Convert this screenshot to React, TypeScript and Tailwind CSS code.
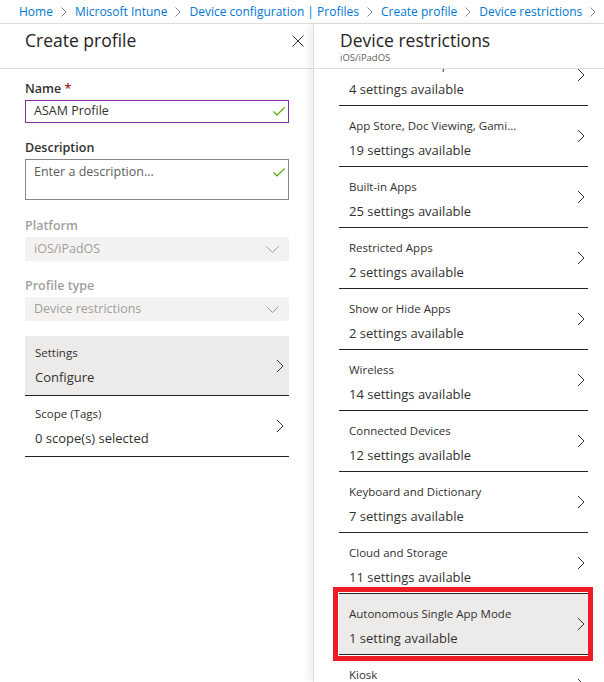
import React from "react";

const crumbs = [
  "Home",
  "Microsoft Intune",
  "Device configuration | Profiles",
  "Create profile",
  "Device restrictions",
];

interface SettingRow {
  title: string;
  detail: string;
  selected?: boolean;
}

const rows: SettingRow[] = [
  { title: "Locked Screen Experience", detail: "4 settings available" },
  { title: "App Store, Doc Viewing, Gami...", detail: "19 settings available" },
  { title: "Built-in Apps", detail: "25 settings available" },
  { title: "Restricted Apps", detail: "2 settings available" },
  { title: "Show or Hide Apps", detail: "2 settings available" },
  { title: "Wireless", detail: "14 settings available" },
  { title: "Connected Devices", detail: "12 settings available" },
  { title: "Keyboard and Dictionary", detail: "7 settings available" },
  { title: "Cloud and Storage", detail: "11 settings available" },
  { title: "Autonomous Single App Mode", detail: "1 setting available", selected: true },
  { title: "Kiosk", detail: "3 settings available" },
];

const ChevronRight = () => (
  <svg width="8" height="14" viewBox="0 0 8 14">
    <polyline points="1,1 7,7 1,13" fill="none" stroke="#323130" strokeWidth="1" />
  </svg>
);

const ChevronDown = () => (
  <svg width="13" height="7" viewBox="0 0 13 7">
    <polyline points="0.5,0.5 6.5,6.5 12.5,0.5" fill="none" stroke="#a19f9d" strokeWidth="1" />
  </svg>
);

const Check = () => (
  <svg width="12" height="9" viewBox="0 0 12 9">
    <polyline points="0.5,4.5 4,8 11.5,0.5" fill="none" stroke="#57a300" strokeWidth="1.2" />
  </svg>
);

const Crumb = ({ label }: { label: string }) => (
  <div className="flex items-center">
    <span className="whitespace-nowrap">{label}</span>
    <svg width="6" height="10" viewBox="0 0 6 10" className="mx-[8px]">
      <polyline points="0.5,0.5 5,5 0.5,9.5" fill="none" stroke="#8a8886" strokeWidth="1" />
    </svg>
  </div>
);

const Label = ({ children, disabled }: { children: React.ReactNode; disabled?: boolean }) => (
  <p
    className={`text-[12.5px] leading-[17px] font-semibold ${
      disabled ? "text-[#a19f9d]" : "text-[#323130]"
    }`}
  >
    {children}
  </p>
);

const Select = ({ value }: { value: string }) => (
  <div className="mt-[3px] h-[24px] bg-[#f3f2f1] rounded-[2px] flex items-center justify-between pl-[9px] pr-[10px]">
    <span className="text-[12.5px] text-[#a19f9d]">{value}</span>
    <ChevronDown />
  </div>
);

export default function App() {
  return (
    <div className="w-[604px] h-[682px] overflow-hidden bg-white text-[#323130] font-['Open_Sans',sans-serif]">
      <nav className="h-[24px] flex items-center pl-[19px] text-[12px] text-[#0078d4] border-b border-[#e1dfdd] overflow-hidden">
        {crumbs.map((c) => (
          <Crumb key={c} label={c} />
        ))}
      </nav>

      <div className="flex h-[658px]">
        {/* left blade */}
        <section className="w-[313px] shrink-0 flex flex-col">
          <header className="h-[45px] border-b border-[#e1dfdd] flex items-start justify-between pl-[25px] pr-[9px] pt-[3px]">
            <h1 className="text-[17.5px] leading-[26px] text-[#252423]">Create profile</h1>
            <svg width="12" height="12" viewBox="0 0 12 12" className="mt-[8px]">
              <path d="M0.5 0.5 L11.5 11.5 M11.5 0.5 L0.5 11.5" stroke="#323130" strokeWidth="1" />
            </svg>
          </header>

          <div className="pl-[25px] pr-[24px] pt-[11px] flex flex-col">
            <Label>
              Name <span className="text-[#a4262c]">*</span>
            </Label>
            <div className="mt-[3px] h-[23px] border border-[#8a2da5] flex items-center justify-between pl-[8px] pr-[3px]">
              <span className="text-[12.5px] text-[#323130]">ASAM Profile</span>
              <Check />
            </div>

            <div className="mt-[16px]">
              <Label>Description</Label>
            </div>
            <div className="mt-[3px] h-[41px] border border-[#8a8886] flex items-start justify-between pl-[8px] pr-[3px] pt-[3px]">
              <span className="text-[12.5px] leading-[18px] text-[#605e5c]">Enter a description...</span>
              <div className="mt-[5px]">
                <Check />
              </div>
            </div>

            <div className="mt-[17px]">
              <Label disabled>Platform</Label>
            </div>
            <Select value="iOS/iPadOS" />

            <div className="mt-[16px]">
              <Label disabled>Profile type</Label>
            </div>
            <Select value="Device restrictions" />

            <div className="mt-[15px] flex flex-col">
              <div className="h-[60px] flex items-center justify-between bg-[#edebe9] border-b border-[#252423] pl-[10px] pr-[5px]">
                <div className="flex flex-col pt-[1px]">
                  <span className="text-[11.5px] leading-[16px]">Settings</span>
                  <span className="mt-[6px] text-[13px] leading-[20px]">Configure</span>
                </div>
                <ChevronRight />
              </div>
              <div className="h-[61px] flex items-center justify-between border-b border-[#252423] pl-[10px] pr-[5px]">
                <div className="flex flex-col pt-[1px]">
                  <span className="text-[11.5px] leading-[16px]">Scope (Tags)</span>
                  <span className="mt-[6px] text-[13px] leading-[20px]">0 scope(s) selected</span>
                </div>
                <ChevronRight />
              </div>
            </div>
          </div>
        </section>

        {/* right blade */}
        <section className="relative flex-1 flex flex-col border-l border-[#e1dfdd] shadow-[-5px_0_7px_rgba(0,0,0,0.06)] min-w-0">
          <header className="h-[45px] shrink-0 border-b border-[#e1dfdd] pl-[26px] pt-[4px] bg-white relative z-20">
            <h2 className="text-[17.5px] leading-[24px] text-[#252423]">Device restrictions</h2>
            <p className="text-[9.5px] leading-[12px] text-[#605e5c]">iOS/iPadOS</p>
          </header>
          <div className="flex-1 overflow-hidden pl-[25px] pr-[16px]">
            <div className="-mt-[24px] flex flex-col">
              {rows.map((r) => (
                <div key={r.title} className="relative">
                  <div
                    className={`h-[61px] flex items-center justify-between border-b border-[#252423] pl-[10px] pr-[3px] ${
                      r.selected ? "bg-[#edebe9]" : ""
                    }`}
                  >
                    <div className="flex flex-col self-start pt-[12px]">
                      <span className="text-[11.5px] leading-[16px] text-[#323130] whitespace-nowrap">{r.title}</span>
                      <span className="mt-[6px] text-[13px] leading-[20px] text-[#323130] whitespace-nowrap">{r.detail}</span>
                    </div>
                    <ChevronRight />
                  </div>
                  {r.selected && (
                    <div className="absolute -top-[7px] -left-[6px] -right-[5px] -bottom-[6px] border-[5px] border-[#ed1c24] z-10 pointer-events-none" />
                  )}
                </div>
              ))}
            </div>
          </div>
        </section>
      </div>
    </div>
  );
}
